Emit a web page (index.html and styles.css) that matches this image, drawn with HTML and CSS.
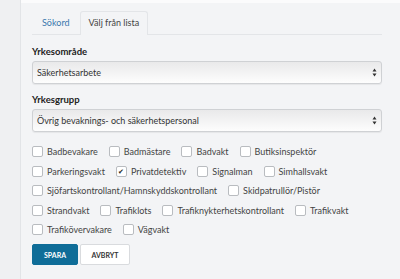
FILE: index.html
```html
<!DOCTYPE html>
<html lang="sv">
<head>
    <meta charset="UTF-8">
    <title>Yrken</title>
    <link rel="stylesheet" href="styles.css">
</head>
<body>
    <div class="layout">
        <aside class="sidebar"></aside>
        <main class="main">
            <ul class="tabs">
                <li class="tab">Sökord</li>
                <li class="tab active">Välj från lista</li>
            </ul>

            <label class="field-label">Yrkesområde</label>
            <div class="select-wrap">
                <select class="select"><option>Säkerhetsarbete</option></select>
                <svg class="select-arrow" width="5" height="9" viewBox="0 0 5 9"><path d="M2.5 0.5 L4.5 3.5 L0.5 3.5 Z M2.5 8.5 L4.5 5.5 L0.5 5.5 Z" fill="#333"/></svg>
            </div>

            <label class="field-label">Yrkesgrupp</label>
            <div class="select-wrap">
                <select class="select"><option>Övrig bevaknings- och säkerhetspersonal</option></select>
                <svg class="select-arrow" width="5" height="9" viewBox="0 0 5 9"><path d="M2.5 0.5 L4.5 3.5 L0.5 3.5 Z M2.5 8.5 L4.5 5.5 L0.5 5.5 Z" fill="#333"/></svg>
            </div>

            <div class="checklist">
                <div class="check-row">
                    <label class="check"><span class="box"></span>Badbevakare</label>
                    <label class="check"><span class="box"></span>Badmästare</label>
                    <label class="check"><span class="box"></span>Badvakt</label>
                    <label class="check"><span class="box"></span>Butiksinspektör</label>
                </div>
                <div class="check-row">
                    <label class="check"><span class="box"></span>Parkeringsvakt</label>
                    <label class="check"><span class="box checked">&#10004;</span>Privatdetektiv</label>
                    <label class="check"><span class="box"></span>Signalman</label>
                    <label class="check"><span class="box"></span>Simhallsvakt</label>
                </div>
                <div class="check-row">
                    <label class="check"><span class="box"></span>Sjöfartskontrollant/Hamnskyddskontrollant</label>
                    <label class="check"><span class="box"></span>Skidpatrullör/Pistör</label>
                </div>
                <div class="check-row">
                    <label class="check"><span class="box"></span>Strandvakt</label>
                    <label class="check"><span class="box"></span>Trafiklots</label>
                    <label class="check"><span class="box"></span>Trafiknykterhetskontrollant</label>
                    <label class="check"><span class="box"></span>Trafikvakt</label>
                </div>
                <div class="check-row">
                    <label class="check"><span class="box"></span>Trafikövervakare</label>
                    <label class="check"><span class="box"></span>Vägvakt</label>
                </div>
            </div>

            <div class="actions">
                <button class="btn btn-primary">SPARA</button>
                <button class="btn btn-cancel">AVBRYT</button>
            </div>
        </main>
    </div>
</body>
</html>
```

FILE: styles.css
```css
:root {
    --panel: #f3f4f6;
    --text: #333;
    --link: #3a78ad;
    --border: #d6d8db;
    --primary: #0f6d98;
}

body {
    margin: 0;
    font-family: 'Lato', sans-serif;
    color: var(--text);
    background: var(--panel);
}

.layout {
    display: flex;
    min-height: 279px;
}

.sidebar {
    width: 20px;
    background: #eff0f2;
    border-right: 1px solid #e2e4e7;
}

.main {
    flex: 1;
    border-top: 3px solid #fbfbfc;
    padding: 8px 18px 0 11px;
}

.tabs {
    display: flex;
    list-style: none;
    margin: 0 0 11px 0;
    padding: 0;
    border-bottom: 1px solid #e3e5e8;
    font-size: 9px;
}

.tab {
    padding: 0 9px;
    height: 22px;
    line-height: 22px;
    color: var(--link);
    border: 1px solid transparent;
    border-bottom: none;
    border-radius: 3px 3px 0 0;
    margin-bottom: -1px;
}

.tab.active {
    color: #444;
    background: var(--panel);
    border-color: #e3e5e8;
    padding: 0 8px;
    height: 23px;
}

.field-label {
    display: block;
    font-size: 9.5px;
    line-height: 12px;
    font-weight: bold;
    color: #222;
    margin-bottom: 3px;
}

.select-wrap {
    position: relative;
    margin-bottom: 10px;
}

.select {
    display: block;
    appearance: none;
    -webkit-appearance: none;
    width: 100%;
    height: 23px;
    padding: 0 4px;
    font-family: 'Lato', sans-serif;
    font-size: 9px;
    color: #333;
    border: 1px solid #cfd1d4;
    border-radius: 3px;
    background: linear-gradient(#e9e9ea, #fdfdfd);
    box-shadow: 0 1px 1px rgba(0, 0, 0, 0.06);
}

.select-arrow {
    position: absolute;
    right: 5px;
    top: 7px;
}

.checklist {
    display: flex;
    flex-direction: column;
    gap: 8.5px;
    margin-top: 14px;
    font-size: 9px;
    color: #444;
}

.check-row {
    display: flex;
    gap: 11px;
}

.check {
    display: flex;
    align-items: center;
    height: 11px;
    white-space: nowrap;
}

.box {
    width: 9px;
    height: 9px;
    border: 1px solid #b9bcc0;
    border-radius: 2px;
    background: #fff;
    margin-right: 4px;
    font-size: 7px;
    line-height: 9px;
    text-align: center;
    color: #222;
}

.actions {
    display: flex;
    gap: 2px;
    margin-top: 9px;
}

.btn {
    height: 21px;
    padding: 0;
    font-family: 'Lato', sans-serif;
    font-size: 7px;
    font-weight: bold;
    color: #333;
    background: #fff;
    border: 1px solid #d9dbde;
    border-radius: 2px;
}

.btn-primary {
    width: 46px;
    background: var(--primary);
    border-color: var(--primary);
    color: #fff;
}

.btn-cancel {
    width: 50px;
}
```
